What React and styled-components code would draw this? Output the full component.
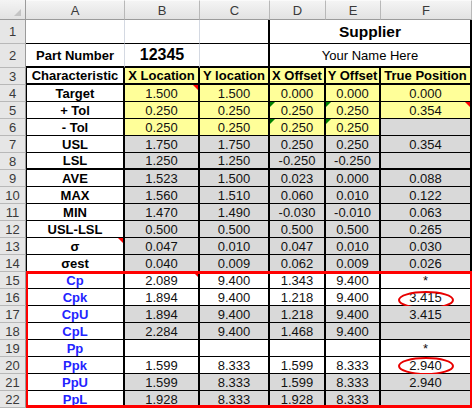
import React from "react";
import styled, { createGlobalStyle, css } from "styled-components";

const GlobalStyle = createGlobalStyle`
  html, body {
    margin: 0;
    padding: 0;
    background: #fff;
  }
  body {
    font-family: "Liberation Sans", Arial, sans-serif;
  }
`;

const BG = { Y: "#ffff99", G: "#d9d9d9", W: "#ffffff" };

const Sheet = styled.div`
  display: grid;
  grid-template-columns: 26px 99px 75px 70px 56px 55px 91px;
  grid-template-rows: 20px 24px 24px repeat(20, 17px);
  width: 472px;
  font-family: "Liberation Sans", Arial, sans-serif;
  font-size: 13px;
  color: #111;
  background: #fff;
`;

// pins an item to its sheet row / column so the red frame can overlap them
const placed = css`
  ${(p) =>
    p.$r &&
    css`
      grid-row: ${p.$r};
    `}
  ${(p) =>
    p.$c &&
    css`
      grid-column: ${p.$c};
    `}
`;

const Corner = styled.div`
  position: relative;
  box-sizing: border-box;
  background: linear-gradient(#f4f4f4, #e2e2e2);
  border-right: 1px solid #9b9b9b;
  border-bottom: 1px solid #9b9b9b;
  &::after {
    content: "";
    position: absolute;
    right: 4px;
    bottom: 3px;
    border-bottom: 7px solid #c4c4c4;
    border-left: 7px solid transparent;
  }
`;

const ColHead = styled.div`
  box-sizing: border-box;
  display: flex;
  align-items: center;
  justify-content: center;
  background: linear-gradient(#f4f4f4, #e2e2e2);
  border-top: 1px solid #fafafa;
  border-right: 1px solid #b8b8b8;
  border-bottom: 1px solid #9b9b9b;
  color: #3a3a3a;
  font-size: 13px;
`;

const RowHead = styled.div`
  box-sizing: border-box;
  display: flex;
  align-items: center;
  justify-content: center;
  background: #e6e6e6;
  border-right: 1px solid #9b9b9b;
  border-bottom: 1px solid #b8b8b8;
  color: #3a3a3a;
  font-size: 13px;
  ${placed}
`;

const Blank = styled.div`
  box-sizing: border-box;
  border-right: ${(p) => (p.$edge ? "2px solid #000" : "1px solid #d4d9e2")};
  border-bottom: ${(p) => (p.$thick ? 2 : 1)}px solid #000;
  display: flex;
  align-items: center;
  justify-content: center;
  font-weight: 700;
  font-size: ${(p) => p.$size || 13}px;
  color: #000;
`;

const Merged = styled.div`
  box-sizing: border-box;
  grid-column: span 3;
  display: flex;
  align-items: center;
  justify-content: center;
  border-right: 2px solid #000;
  border-bottom: ${(p) => (p.$thick ? 2 : 1)}px solid #000;
  font-weight: ${(p) => (p.$bold ? 700 : 400)};
  font-size: ${(p) => p.$size || 13}px;
  color: #000;
`;

const Cell = styled.div`
  position: relative;
  box-sizing: border-box;
  display: flex;
  align-items: center;
  justify-content: center;
  white-space: nowrap;
  background: ${(p) => BG[p.$bg || "W"]};
  border-right: 2px solid #000;
  border-bottom: ${(p) => (p.$thick ? 2 : 1)}px solid #000;
  ${(p) =>
    p.$lead &&
    css`
      border-left: 1px solid #000;
    `}
  font-weight: ${(p) => (p.$bold ? 700 : 400)};
  color: ${(p) => (p.$blue ? "#2323ff" : p.$bold ? "#000" : "#111")};
  ${placed}
  ${(p) =>
    p.$mark === "red" &&
    css`
      &::after {
        content: "";
        position: absolute;
        top: 0;
        right: 0;
        border-top: 5px solid #ff0000;
        border-left: 5px solid transparent;
      }
    `}
  ${(p) =>
    p.$mark === "green" &&
    css`
      &::before {
        content: "";
        position: absolute;
        top: 0;
        left: 0;
        border-top: 5px solid #008000;
        border-right: 5px solid transparent;
      }
    `}
`;

const Ring = styled.svg`
  position: absolute;
  left: 50%;
  top: ${(p) => p.$top}px;
  margin-left: -29px;
  overflow: visible;
  pointer-events: none;
`;

const RedFrame = styled.div`
  position: relative;
  z-index: 2;
  grid-row: 16 / 24;
  grid-column: 2 / 8;
  margin-top: -1px;
  box-sizing: border-box;
  border: 2px solid #ff0000;
  border-top-width: 3px;
  border-bottom-width: 3px;
  pointer-events: none;
`;

const rows = [
  { n: 4, label: "Target", vals: ["1.500", "1.500", "0.000", "0.000", "0.000"], bg: "YYYYY", marks: { 1: "red" } },
  { n: 5, label: "+ Tol", vals: ["0.250", "0.250", "0.250", "0.250", "0.354"], bg: "YYYYY", marks: { 3: "green", 4: "green", 5: "red" } },
  { n: 6, label: "- Tol", vals: ["0.250", "0.250", "0.250", "0.250", ""], bg: "YYYYG", marks: { 3: "green", 4: "green" } },
  { n: 7, label: "USL", vals: ["1.750", "1.750", "0.250", "0.250", "0.354"], bg: "GGGGG" },
  { n: 8, label: "LSL", vals: ["1.250", "1.250", "-0.250", "-0.250", ""], bg: "GGGGG", thick: true },
  { n: 9, label: "AVE", vals: ["1.523", "1.500", "0.023", "0.000", "0.088"], bg: "GGGGG" },
  { n: 10, label: "MAX", vals: ["1.560", "1.510", "0.060", "0.010", "0.122"], bg: "GGGGG" },
  { n: 11, label: "MIN", vals: ["1.470", "1.490", "-0.030", "-0.010", "0.063"], bg: "GGGGG" },
  { n: 12, label: "USL-LSL", vals: ["0.500", "0.500", "0.500", "0.500", "0.265"], bg: "GGGGG" },
  { n: 13, label: "σ", vals: ["0.047", "0.010", "0.047", "0.010", "0.030"], bg: "GGGGG", marks: { 0: "red" } },
  { n: 14, label: "σest", vals: ["0.040", "0.009", "0.062", "0.009", "0.026"], bg: "GGGGG" },
  { n: 15, label: "Cp", blue: true, vals: ["2.089", "9.400", "1.343", "9.400", "*"], bg: "WWWWW", marks: { 1: "red" } },
  { n: 16, label: "Cpk", blue: true, vals: ["1.894", "9.400", "1.218", "9.400", "3.415"], bg: "WWWWW", ring: 2 },
  { n: 17, label: "CpU", blue: true, vals: ["1.894", "9.400", "1.218", "9.400", "3.415"], bg: "GGGGG" },
  { n: 18, label: "CpL", blue: true, vals: ["2.284", "9.400", "1.468", "9.400", ""], bg: "GGGGG" },
  { n: 19, label: "Pp", blue: true, vals: ["", "", "", "", "*"], bg: "WWWWW" },
  { n: 20, label: "Ppk", blue: true, vals: ["1.599", "8.333", "1.599", "8.333", "2.940"], bg: "WWWWW", ring: 0 },
  { n: 21, label: "PpU", blue: true, vals: ["1.599", "8.333", "1.599", "8.333", "2.940"], bg: "GGGGG" },
  { n: 22, label: "PpL", blue: true, vals: ["1.928", "8.333", "1.928", "8.333", ""], bg: "GGGGG" },
];

const heads = ["X Location", "Y location", "X Offset", "Y Offset", "True Position"];

function Circle({ top }) {
  return (
    <Ring $top={top} width="58" height="18" viewBox="0 0 58 18">
      <ellipse cx="29" cy="9" rx="27" ry="8" fill="none" stroke="#e80000" strokeWidth="2" />
    </Ring>
  );
}

export default function App() {
  return (
    <>
      <GlobalStyle />
      <Sheet>
        <Corner />
        {["A", "B", "C", "D", "E", "F"].map((c) => (
          <ColHead key={c}>{c}</ColHead>
        ))}

        <RowHead>1</RowHead>
        <Blank />
        <Blank />
        <Blank $edge />
        <Merged $bold $size={15.5}>Supplier</Merged>

        <RowHead>2</RowHead>
        <Blank $thick>Part Number</Blank>
        <Blank $thick $size={16}>12345</Blank>
        <Blank $thick $edge />
        <Merged $thick>Your Name Here</Merged>

        <RowHead>3</RowHead>
        <Cell $lead $bold $thick>Characteristic</Cell>
        {heads.map((h) => (
          <Cell key={h} $bg="Y" $bold $thick>
            {h}
          </Cell>
        ))}

        {rows.map((r) => (
          <React.Fragment key={r.n}>
            <RowHead $r={r.n + 1} $c={1}>
              {r.n}
            </RowHead>
            <Cell
              $r={r.n + 1}
              $c={2}
              $lead
              $bold
              $blue={r.blue}
              $thick={r.thick}
              $mark={r.marks && r.marks[0]}
            >
              {r.label}
            </Cell>
            {r.vals.map((v, i) => (
              <Cell
                key={i}
                $r={r.n + 1}
                $c={i + 3}
                $bg={r.bg[i]}
                $thick={r.thick}
                $mark={r.marks && r.marks[i + 1]}
              >
                {v}
                {i === 4 && r.ring !== undefined && <Circle top={r.ring} />}
              </Cell>
            ))}
          </React.Fragment>
        ))}

        <RedFrame />
      </Sheet>
    </>
  );
}
